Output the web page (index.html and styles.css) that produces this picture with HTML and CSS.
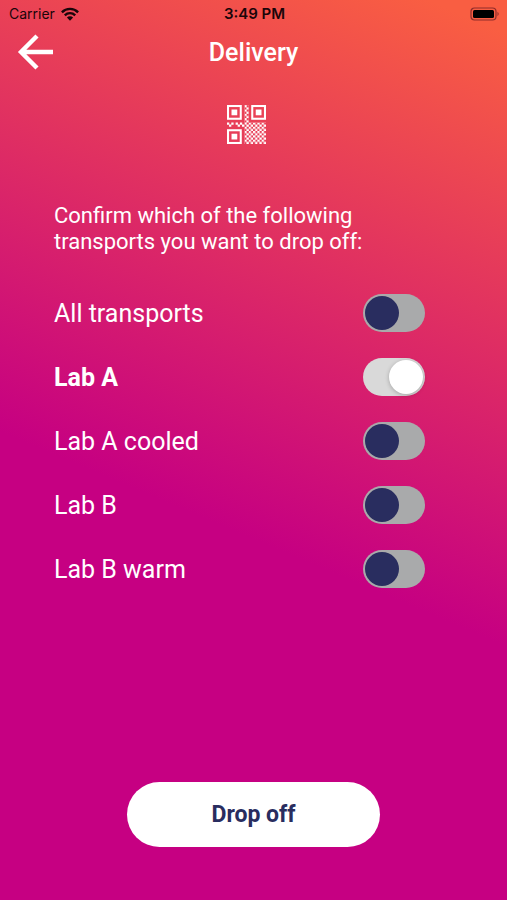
FILE: index.html
```html
<!DOCTYPE html>
<html lang="en">
<head>
<meta charset="utf-8">
<meta name="viewport" content="width=device-width, initial-scale=1">
<title>Delivery</title>
<link rel="stylesheet" href="styles.css">
</head>
<body>
<div class="screen">
  <div class="status">
    <div class="status-left">
      <span>Carrier</span>
      <svg class="wifi" viewBox="0 0 18 14" aria-hidden="true">
        <g fill="none" stroke="#1a0509" stroke-width="2.4">
          <path d="M0.9 5.3a11.4 11.4 0 0 1 16.2 0"/>
          <path d="M3.8 8.3a7.4 7.4 0 0 1 10.4 0"/>
        </g>
        <path fill="#1a0509" d="M9 13.8 5.9 10.6a4.4 4.4 0 0 1 6.2 0z"/>
      </svg>
    </div>
    <time class="clock">3:49 PM</time>
    <svg class="battery" viewBox="0 0 30 14" aria-hidden="true">
      <rect x="1" y="1" width="25" height="12" rx="3.5" fill="none" stroke="#8f2d2b" stroke-width="1.2"/>
      <rect x="3" y="3" width="21" height="8" rx="1.5" fill="#000"/>
      <path fill="#8f2d2b" d="M27.5 4.8q2.4 2.2 0 4.4z"/>
    </svg>
  </div>
  <header class="bar">
    <button class="back" type="button" aria-label="Back">
      <svg viewBox="0 0 36 36" aria-hidden="true">
        <path d="M36 18H4M20 2 4 18l16 16" fill="none" stroke="#fff" stroke-width="4.4"/>
      </svg>
    </button>
    <h1 class="title">Delivery</h1>
  </header>
  <main class="content">
    <svg class="qr" viewBox="0 0 19 19" aria-hidden="true">
      <defs>
        <pattern id="check" x="8.5" y="8.5" width="2.1" height="2.1" patternUnits="userSpaceOnUse">
          <path fill="#fff" d="M0 0h1.1v1.1H0zM1 1h1.1v1.1H1z"/>
        </pattern>
        <g id="finder">
          <rect x=".5" y=".5" width="6.2" height="6.2" fill="none" stroke="#fff"/>
          <rect x="2.2" y="2.2" width="2.8" height="2.8" fill="#fff"/>
        </g>
      </defs>
      <use href="#finder"/>
      <use href="#finder" x="11.8"/>
      <use href="#finder" y="11.8"/>
      <path fill="url(#check)" d="M8.5 0h2.1v8.5H19V19H8.5z"/>
      <path fill="#fff" d="M0 8.5h1.1v1.1H0zM2.1 8.5h1.1v1.1H2.1zM1 9.5h1.1v1.1H1zM4.2 8.5h1.1v1.1H4.2zM6.3 8.5h1.1v1.1H6.3zM5.2 9.5h1.1v1.1H5.2zM7.3 9.5h1.1v1.1H7.3z"/>
    </svg>
    <form class="form" id="drop">
      <p class="intro">Confirm which of the following transports you want to drop off:</p>
      <ul class="list">
        <li class="row"><label for="all">All transports</label><input class="switch" type="checkbox" role="switch" id="all"></li>
        <li class="row"><label for="a">Lab A</label><input class="switch" type="checkbox" role="switch" id="a" checked></li>
        <li class="row"><label for="ac">Lab A cooled</label><input class="switch" type="checkbox" role="switch" id="ac"></li>
        <li class="row"><label for="b">Lab B</label><input class="switch" type="checkbox" role="switch" id="b"></li>
        <li class="row"><label for="bw">Lab B warm</label><input class="switch" type="checkbox" role="switch" id="bw"></li>
      </ul>
    </form>
  </main>
  <footer class="footer">
    <button class="submit" type="button">Drop off</button>
  </footer>
</div>
</body>
</html>
```
FILE: styles.css
```css
* {
  box-sizing: border-box;
}

body {
  margin: 0;
  font-family: Roboto, "Liberation Sans", sans-serif;
  color: #fff;
}

.screen {
  display: flex;
  flex-direction: column;
  min-height: 100vh;
  background: linear-gradient(203deg, #f95e42 0%, #f95e42 3%, #c60082 58%);
}

.status {
  display: grid;
  grid-template-columns: 1fr auto 1fr;
  align-items: center;
  height: 27px;
  padding: 0 7px 0 9px;
  font-family: Inter, "Liberation Sans", sans-serif;
  font-size: 15px;
  color: #1a0509;
}

.status-left {
  display: flex;
  align-items: center;
  gap: 6px;
  font-size: 14px;
}

.wifi {
  width: 18px;
  height: 14px;
}

.clock {
  font-weight: 600;
}

.battery {
  justify-self: end;
  width: 30px;
  height: 14px;
}

.bar {
  display: grid;
  grid-template-columns: 1fr auto 1fr;
  align-items: center;
  height: 50px;
  padding: 0 17px;
}

.back {
  justify-self: start;
  width: 36px;
  height: 36px;
  padding: 0;
  border: 0;
  background: none;
  cursor: pointer;
}

.back svg {
  display: block;
}

.title {
  margin: 0;
  font-size: 25px;
  font-weight: 500;
}

.content {
  display: flex;
  flex: 1;
  flex-direction: column;
  padding: 28px 82px 0 54px;
}

.qr {
  align-self: center;
  width: 39px;
  height: 39px;
  margin-left: 14px;
}

.form {
  margin-top: 59px;
}

.intro {
  margin: 0;
  font-size: 22px;
  line-height: 26px;
}

.list {
  margin: 26px 0 0;
  padding: 0;
  list-style: none;
}

.row {
  display: flex;
  align-items: center;
  justify-content: space-between;
  height: 64px;
  font-size: 25px;
}

.row:has(:checked) {
  font-weight: 700;
}

.switch {
  display: flex;
  align-items: center;
  width: 62px;
  height: 38px;
  margin: 0;
  padding: 0 2px;
  border-radius: 19px;
  background: #a9aaab;
  appearance: none;
  cursor: pointer;
}

.switch::before {
  width: 34px;
  height: 34px;
  border-radius: 50%;
  background: #292d5f;
  content: "";
}

.switch:checked {
  justify-content: flex-end;
  background: #d9d9d9;
}

.switch:checked::before {
  background: #fff;
  box-shadow: 0 1px 4px rgba(0, 0, 0, 0.25);
}

.footer {
  display: flex;
  justify-content: center;
  padding: 24px 0 53px;
}

.submit {
  width: 50%;
  height: 65px;
  border: 0;
  border-radius: 33px;
  background: #fff;
  color: #292d5f;
  font-family: inherit;
  font-size: 23px;
  font-weight: 700;
  cursor: pointer;
}
```
